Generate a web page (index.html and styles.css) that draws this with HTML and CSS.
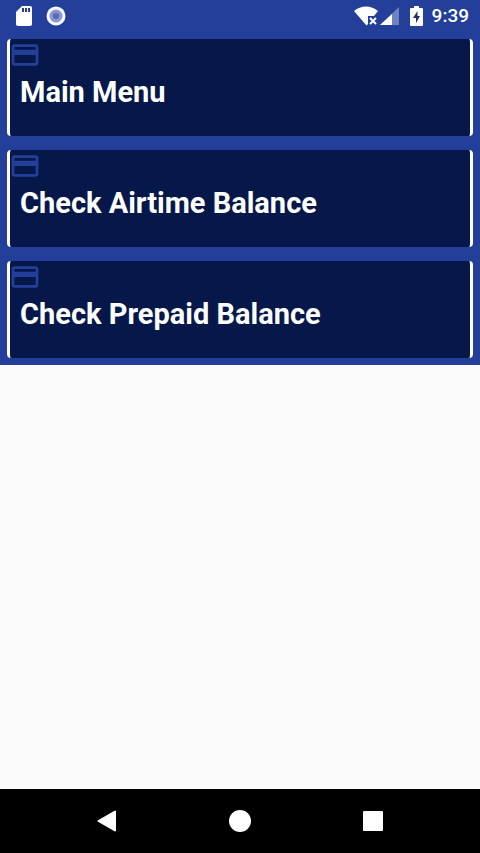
FILE: index.html
```html
<!DOCTYPE html>
<html lang="en">
<head>
<meta charset="utf-8">
<meta name="viewport" content="width=device-width, initial-scale=1">
<title>Main Menu</title>
<link rel="stylesheet" href="styles.css">
</head>
<body>
<svg class="defs" aria-hidden="true">
  <symbol id="card" viewBox="0 0 24 24"><path d="M20 4H4c-1.110 0-1.990.89-1.990 2L2 18c0 1.110.89 2 2 2h16c1.110 0 2-.89 2-2V6c0-1.110-.89-2-2-2zm0 14H4v-6h16v6zm0-10H4V6h16v2z"/></symbol>
</svg>
<header class="status">
  <div class="status-group notices">
    <svg width="16" height="20" viewBox="0 0 16 20" aria-hidden="true"><path fill="#fff" d="M6 0h8a2 2 0 0 1 2 2v16a2 2 0 0 1-2 2H2a2 2 0 0 1-2-2V6z"/><path fill="#233f99" d="M6 2h2v4H6zM9 2h2v4H9zM12 2h2v4h-2z"/></svg>
    <svg width="20" height="20" viewBox="0 0 20 20" aria-hidden="true"><circle cx="10" cy="10" r="9.500" fill="#f5f9ff"/><circle cx="10" cy="10" r="6.500" fill="#8a97ce"/><circle cx="10" cy="10" r="3" fill="#5a69b2"/></svg>
  </div>
  <div class="status-group">
    <svg width="46" height="20" viewBox="0 0 46 20" aria-hidden="true"><path fill="#fff" d="M0 5C7-1 17-1 24 5L20 10H14V18L12.500 19.500z"/><path stroke="#fff" stroke-width="2" d="M16 12l6 6M22 12l-6 6"/><path fill="#7183be" d="M45 1v18H26z"/><path fill="#fff" d="M38 8v11H26z"/></svg>
    <svg class="battery" width="13" height="20" viewBox="0 0 13 20" aria-hidden="true"><path fill="#fff" d="M4 0h5v2h3a1 1 0 0 1 1 1v16a1 1 0 0 1-1 1H1a1 1 0 0 1-1-1V3a1 1 0 0 1 1-1h3z"/><path fill="#1d2e68" d="M7.500 5L3 12h3v5l4-7H7.500z"/></svg>
    <span class="clock">9:39</span>
  </div>
</header>
<main class="content">
  <nav class="menu">
    <a class="item" href="#main"><svg class="icon" aria-hidden="true"><use href="#card"/></svg><span class="label">Main Menu</span></a>
    <a class="item" href="#airtime"><svg class="icon" aria-hidden="true"><use href="#card"/></svg><span class="label">Check Airtime Balance</span></a>
    <a class="item" href="#prepaid"><svg class="icon" aria-hidden="true"><use href="#card"/></svg><span class="label">Check Prepaid Balance</span></a>
  </nav>
</main>
<footer class="navbar">
  <button class="key" type="button" aria-label="Back"><svg width="24" height="24" viewBox="0 0 24 24"><path fill="#fff" stroke="#fff" stroke-width="2" stroke-linejoin="round" d="M21 2.500v19L4.500 12z"/></svg></button>
  <button class="key" type="button" aria-label="Home"><svg width="24" height="24" viewBox="0 0 24 24"><circle cx="12" cy="12" r="11" fill="#fff"/></svg></button>
  <button class="key" type="button" aria-label="Recent apps"><svg width="24" height="24" viewBox="0 0 24 24"><rect x="1" y="2" width="20" height="20" rx="1" fill="#fff"/></svg></button>
</footer>
</body>
</html>
```
FILE: styles.css
```css
* {
  box-sizing: border-box;
}

body {
  margin: 0;
  min-height: 100vh;
  display: flex;
  flex-direction: column;
  background: #fbfbfb;
  color: #fff;
  font-family: Roboto, "Liberation Sans", sans-serif;
}

.defs {
  position: absolute;
  width: 0;
  height: 0;
}

.status {
  display: flex;
  align-items: center;
  justify-content: space-between;
  height: 32px;
  padding: 0 11px 0 16px;
  background: #233f99;
}

.status-group {
  display: flex;
  align-items: center;
}

.notices {
  gap: 14px;
}

.battery {
  margin: 0 9px 0 10px;
}

.clock {
  font-size: 19px;
  font-weight: 500;
  line-height: 32px;
}

.content {
  flex: 1;
}

.menu {
  display: flex;
  flex-direction: column;
  gap: 14px;
  padding: 7px;
  background: #233f99;
}

.item {
  display: flex;
  flex-direction: column;
  padding-bottom: 26px;
  border: solid #fff;
  border-width: 0 3px;
  border-radius: 4px;
  background: #051849;
  color: #fff;
  text-decoration: none;
}

.icon {
  width: 32px;
  height: 32px;
  margin-left: -1px;
  fill: #233f99;
}

.label {
  padding: 3px 10px 0;
  font-size: 29px;
  font-weight: 700;
  line-height: 36px;
}

.navbar {
  display: flex;
  justify-content: center;
  height: 64px;
  background: #000;
}

.key {
  display: flex;
  align-items: center;
  justify-content: center;
  width: 28%;
  padding: 0;
  border: 0;
  background: none;
}
```
